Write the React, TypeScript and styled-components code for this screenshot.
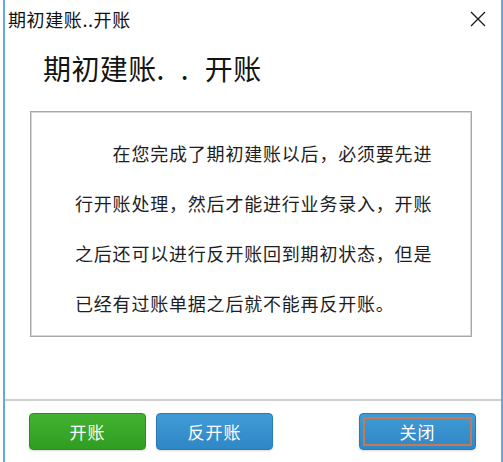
import React from 'react';
import styled, { createGlobalStyle } from 'styled-components';

const GlobalStyle = createGlobalStyle`
  html, body {
    margin: 0;
    padding: 0;
    background: #ffffff;
  }
  body {
    font-family: "Noto Sans CJK SC", "Noto Sans", sans-serif;
  }
`;

const Page = styled.div`
  width: 503px;
  height: 462px;
  padding-left: 3px;
  box-sizing: border-box;
  background: #ffffff;
  overflow: hidden;
`;

const Frame = styled.div`
  width: 500px;
  height: 462px;
  box-sizing: border-box;
  border-left: 2px solid #62a9e8;
  border-right: 2px solid #62a9e8;
  display: flex;
  flex-direction: column;
  background: #ffffff;
`;

const TitleBar = styled.div`
  height: 38px;
  display: flex;
  align-items: center;
  justify-content: space-between;
  padding-left: 3px;
`;

const TitleText = styled.div`
  font-size: 18px;
  letter-spacing: 0.6px;
  color: #111;
`;

const CloseBox = styled.div`
  width: 46px;
  height: 38px;
  display: flex;
  align-items: center;
  justify-content: center;
`;

const Heading = styled.div`
  height: 60px;
  line-height: 60px;
  padding-left: 38px;
  font-size: 28px;
  letter-spacing: 0.4px;
  color: #141414;
`;

const Dots = styled.span`
  letter-spacing: 5px;
`;

const Content = styled.div`
  padding: 13px 0 0 25px;
  flex: 1;
`;

const Notice = styled.div`
  width: 442px;
  height: 226px;
  box-sizing: border-box;
  border: 1px solid #a9a9a9;
  box-shadow: inset 0 0 0 1px #d6d6d6;
  padding: 16px 0 0 44px;
`;

const NoticeText = styled.p`
  margin: 0;
  width: 360px;
  font-size: 18px;
  letter-spacing: 0.8px;
  line-height: 50px;
  text-indent: 37.6px;
  color: #1e1e1e;
`;

const Divider = styled.div`
  height: 2px;
  background: #cfcfcf;
`;

const Footer = styled.div`
  height: 61px;
  box-sizing: border-box;
  padding: 12px 0 0 24px;
  display: flex;
  gap: 10px;
`;

const Spacer = styled.div`
  width: 66px;
`;

const Button = styled.button<{ $tone: 'green' | 'blue'; $focused?: boolean }>`
  width: 117px;
  height: 37px;
  border-radius: 4px;
  border: 1px solid ${({ $tone }) => ($tone === 'green' ? '#2b8f1d' : '#2a7cb8')};
  background: ${({ $tone }) =>
    $tone === 'green'
      ? 'linear-gradient(#43b132, #2f9e20)'
      : 'linear-gradient(#409bd5, #2f87c6)'};
  color: #ffffff;
  font-family: "Noto Sans CJK SC", sans-serif;
  font-size: 17px;
  letter-spacing: 1px;
  padding: 0;
  outline: ${({ $focused }) => ($focused ? '2px solid #c47a55' : 'none')};
  outline-offset: -6px;
  box-shadow: 0 1px 2px rgba(0, 0, 0, 0.15);
`;

const CloseIcon = () => (
  <svg width="16" height="16" viewBox="0 0 16 16">
    <path d="M1 1 L15 15 M15 1 L1 15" stroke="#1a1a1a" strokeWidth="1.3" fill="none" />
  </svg>
);

export default function App() {
  return (
    <Page>
      <GlobalStyle />
      <Frame>
        <TitleBar>
          <TitleText>期初建账..开账</TitleText>
          <CloseBox>
            <CloseIcon />
          </CloseBox>
        </TitleBar>
        <Heading>
          期初建账<Dots>. . </Dots>开账
        </Heading>
        <Content>
          <Notice>
            <NoticeText>
              在您完成了期初建账以后，必须要先进行开账处理，然后才能进行业务录入，开账之后还可以进行反开账回到期初状态，但是已经有过账单据之后就不能再反开账。
            </NoticeText>
          </Notice>
        </Content>
        <Divider />
        <Footer>
          <Button $tone="green">开账</Button>
          <Button $tone="blue">反开账</Button>
          <Spacer />
          <Button $tone="blue" $focused>
            关闭
          </Button>
        </Footer>
      </Frame>
    </Page>
  );
}
